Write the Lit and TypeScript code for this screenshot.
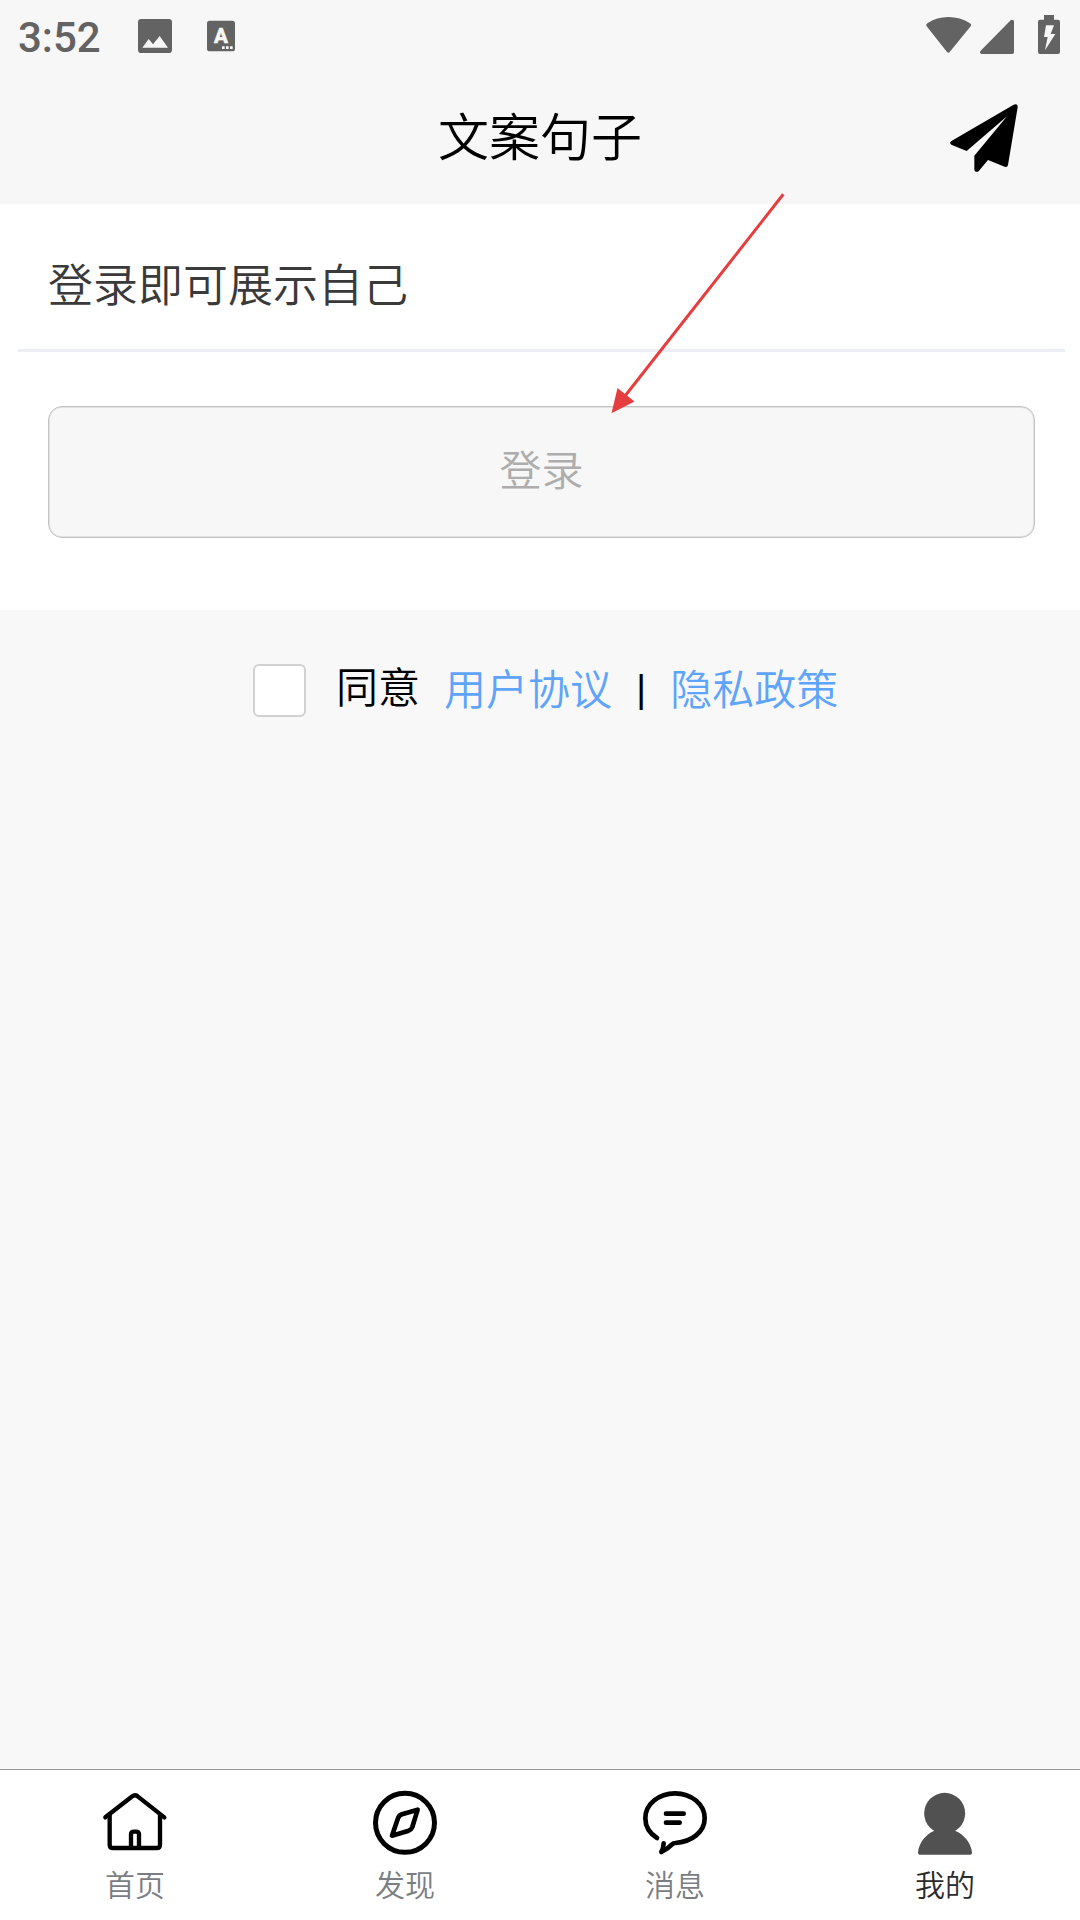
import { LitElement, html, css, svg } from "lit";
import { customElement, property } from "lit/decorators.js";

const homeIcon = svg`
  <g fill="none" stroke="#000" stroke-width="13" stroke-linecap="round" stroke-linejoin="round">
    <path d="M76 202 L157 139 Q165 133 173 139 L253 202"/>
    <path d="M89 194 V284 Q89 294 99 294 H230 Q240 294 240 284 V194"/>
    <path d="M153 292 V253 Q153 245 162 245 H168 Q177 245 177 253 V292"/>
  </g>`;

const compassIcon = svg`
  <g fill="none" stroke="#000" stroke-linejoin="round">
    <circle cx="975" cy="218.500" r="88.500" stroke-width="15"/>
    <path stroke-width="14" d="M1013 179 L966 193 Q957 196 954 205 L936 257 L986 242 Q994 239 997 231 Z"/>
  </g>`;

const messageIcon = svg`
  <g fill="none" stroke="#000" stroke-width="14" stroke-linecap="round" stroke-linejoin="round">
    <path d="M111 264 C90 251 76 229 76 205 C76 163 116 130 165 130 C214 130 254 163 254 205 C254 246 215 276 166 279 Q160 279 156 283 Q144 296 124 306 Q130 296 131 280"/>
    <path d="M138 191 H191 M138 218 H179"/>
  </g>`;

const userIcon = svg`
  <g fill="#515151">
    <circle cx="974" cy="190" r="61.500"/>
    <path d="M943 242 H1005 C1032 253 1053 278 1056 307 Q1057 314 1050 314 H900 Q893 314 894 307 C897 278 917 253 943 242 Z"/>
  </g>`;

const tabs = [
  { label: "首页", icon: homeIcon, box: "66 120 198 198" },
  { label: "发现", icon: compassIcon, box: "876 120 198 198" },
  { label: "消息", icon: messageIcon, box: "66 120 198 198" },
  { label: "我的", icon: userIcon, box: "876 120 198 198", active: true },
];

@customElement("status-bar")
export class StatusBar extends LitElement {
  static styles = css`
    :host { display: flex; height: 60px; align-items: flex-start; justify-content: space-between; }
    .left { display: flex; padding-left: 18px; }
    .right { display: flex; padding-right: 18px; }
    .time { width: 114px; padding-top: 13px; font: 500 42px/50px Roboto, sans-serif; color: #636363; }
    .icon { display: block; height: 60px; fill: #636363; }
    .picture { width: 50px; }
    .input { width: 60px; }
    .wifi { width: 50px; }
    .signal { width: 50px; }
    .battery { width: 38px; }
    .glyph { font: 700 62px Roboto, sans-serif; fill: #f7f7f7; stroke: #f7f7f7; stroke-width: 2; }
    .cut { fill: #f7f7f7; }
  `;
  render() {
    return html`
      <div class="left">
        <span class="time">3:52</span>
        <svg class="icon picture" viewBox="396 0 150 180">
          <rect x="414" y="57" width="102" height="102" rx="10"/>
          <path class="cut" d="M427 143 L446 117 L459 133 L479 108 L504 143 Z"/>
        </svg>
        <svg class="icon input" viewBox="546 0 180 180">
          <rect x="621" y="62" width="84" height="92" rx="8"/>
          <text class="glyph" x="663" y="129" text-anchor="middle">A</text>
          <path class="cut" d="M666 139h8v8h-8zM678 139h8v8h-8zM690 139h8v8h-8z"/>
        </svg>
      </div>
      <div class="right">
        <svg class="icon wifi" viewBox="72 0 150 180">
          <path d="M80 79 Q76 74 82 70 Q110 51 145 51 Q181 51 210 70 Q216 74 212 79 L149 156 Q145 161 141 156 Z"/>
        </svg>
        <svg class="icon signal" viewBox="222 0 150 180">
          <path d="M332 61 Q335 58 339 60 Q342 61 342 65 V157 Q342 162 337 162 H245 Q240 162 240 157 Q240 154 242 152 Z"/>
        </svg>
        <svg class="icon battery" viewBox="372 0 114 180">
          <path d="M432 45 H462 V59 H474 Q480 59 480 65 V156 Q480 162 474 162 H420 Q414 162 414 156 V65 Q414 59 420 59 H432 Z"/>
          <path class="cut" d="M438 76 H462 L452 102 H466 L435 151 L443 111 H432 Z"/>
        </svg>
      </div>`;
  }
}

@customElement("tab-item")
export class TabItem extends LitElement {
  @property() label = "";
  @property() box = "";
  @property({ attribute: false }) icon: unknown;
  @property({ type: Boolean, reflect: true }) active = false;
  static styles = css`
    :host { display: flex; flex: 1; flex-direction: column; align-items: center; padding-top: 20px; color: #7a7e83; }
    :host([active]) { color: #2b2b2b; }
    .icon { display: block; width: 66px; height: 66px; }
    .label { margin-top: 7px; font-size: 30px; line-height: 40px; }
  `;
  render() {
    return html`
      <svg class="icon" viewBox=${this.box}>${this.icon}</svg>
      <span class="label">${this.label}</span>`;
  }
}

@customElement("app-root")
export class AppRoot extends LitElement {
  static styles = css`
    :host {
      display: flex; flex-direction: column; position: relative; box-sizing: border-box;
      width: 1080px; height: 1920px; overflow: hidden; background: #f8f8f8;
      font-family: "Noto Sans CJK SC", sans-serif; font-weight: 350; color: #000;
    }
    .top { height: 204px; background: #f7f7f7; }
    .header { display: grid; grid-template-columns: 1fr auto 1fr; height: 144px; }
    .title { grid-column: 2; margin: 0; padding-top: 38px; font-size: 51px; line-height: 72px; font-weight: inherit; }
    .send { justify-self: end; width: 72px; height: 72px; margin: 42px 60px 0 0; }
    .card { height: 406px; background: #fff; }
    .prompt { height: 145px; margin: 0 15px 0 18px; padding: 0 30px; border-bottom: 3px solid #ebeef5; }
    .prompt-text { display: block; padding-top: 46px; font-size: 45px; line-height: 66px; color: #3a3a3a; }
    .login {
      display: block; box-sizing: border-box; width: 987px; height: 132px; margin: 54px 0 0 48px; padding: 0 0 10px;
      border: 1px solid #c3c3c3; border-radius: 14px; background: #f7f7f7; box-shadow: inset 0 0 0 1px #e2e2e2;
      font: inherit; font-size: 42px; color: #adadad;
    }
    .agree { display: flex; padding: 54px 0 0 253px; font-size: 42px; line-height: 60px; }
    .check { box-sizing: border-box; width: 53px; height: 53px; border: 2px solid #d1d1d1; border-radius: 6px; background: #fff; }
    .consent { margin: -9px 0 0 30px; }
    .link { color: #5fa4fb; margin: -7px 0 0 24px; }
    .bar { margin: -4px 0 0 24px; font-family: Roboto, sans-serif; font-weight: 400; }
    .bar + .link { margin-left: 24px; }
    .space { flex: 1; }
    .tabs { display: flex; height: 150px; border-top: 1px solid #949494; background: #fff; }
    .pointer { position: absolute; left: 600px; top: 180px; width: 200px; height: 250px; pointer-events: none; }
  `;
  render() {
    return html`
      <div class="top">
        <status-bar></status-bar>
        <header class="header">
          <h1 class="title">文案句子</h1>
          <svg class="send" viewBox="144 306 216 216">
            <path d="M341 314 Q354 309 353 322 L324 495 Q322 503 314 500 L264 480 L237 512 Q233 517 227 515 Q223 513 223 508 V467 L321 349 L200 453 L154 434 Q147 430 153 424 Z"/>
          </svg>
        </header>
      </div>
      <main class="card">
        <div class="prompt"><span class="prompt-text">登录即可展示自己</span></div>
        <button class="login">登录</button>
      </main>
      <div class="agree">
        <span class="check"></span>
        <span class="consent">同意</span>
        <span class="link">用户协议</span>
        <span class="bar">|</span>
        <span class="link">隐私政策</span>
      </div>
      <div class="space"></div>
      <nav class="tabs">
        ${tabs.map((t) => html`<tab-item .label=${t.label} .icon=${t.icon} .box=${t.box} ?active=${!!t.active}></tab-item>`)}
      </nav>
      <svg class="pointer" viewBox="600 180 200 250">
        <path d="M783.3 194.3 L625 396" stroke="#e63e3e" stroke-width="3" fill="none"/>
        <path d="M611.5 413.3 L617.5 388 L634.5 401.5 Z" fill="#e63e3e"/>
      </svg>`;
  }
}
